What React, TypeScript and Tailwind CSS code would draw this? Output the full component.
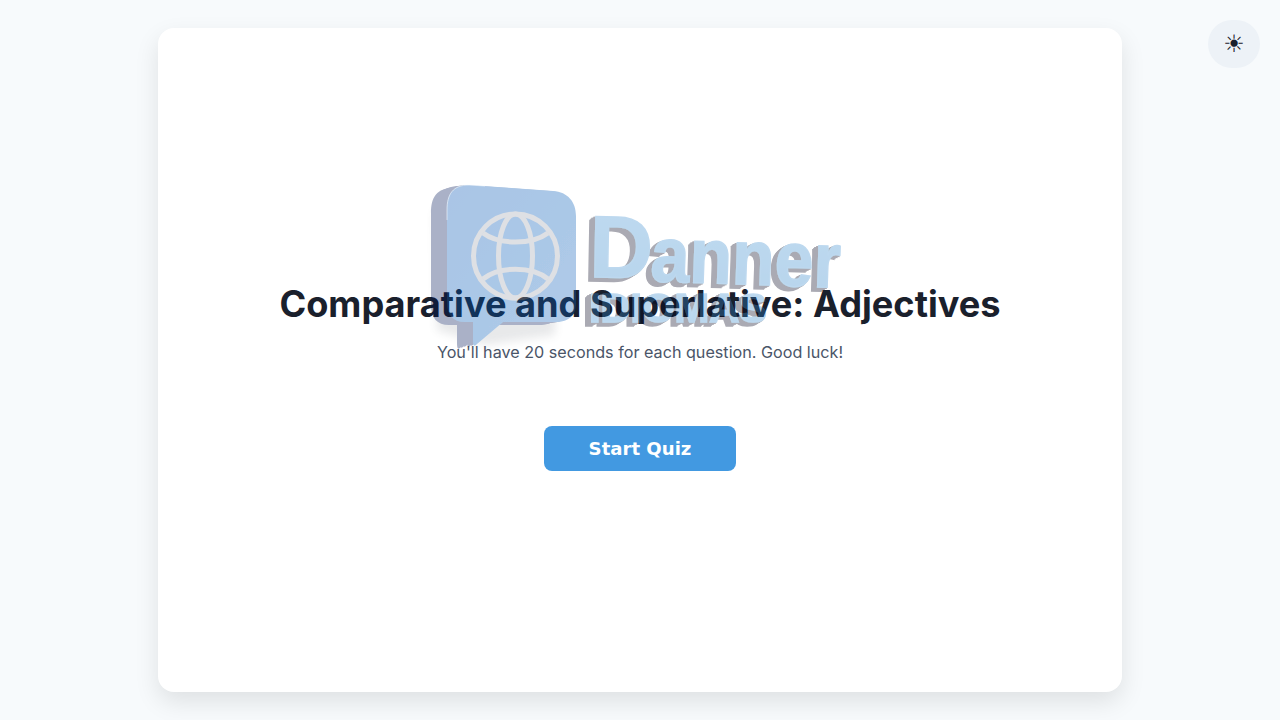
function Logo() {
  return (
    <svg
      width="450"
      height="180"
      viewBox="0 0 450 180"
      className="pointer-events-none absolute left-[267px] top-[152px] font-['Liberation_Sans',sans-serif] font-bold opacity-[0.33]"
    >
      <defs>
        <linearGradient id="bubble" x1="0" y1="0" x2="1" y2="1">
          <stop offset="0" stopColor="#0052b4" />
          <stop offset="1" stopColor="#0a62bc" />
        </linearGradient>
        <linearGradient id="word" x1="0" y1="0" x2="0" y2="1">
          <stop offset="0" stopColor="#3f90d2" />
          <stop offset="1" stopColor="#2880c8" />
        </linearGradient>
        <filter id="soft" x="-20%" y="-20%" width="140%" height="140%">
          <feGaussianBlur stdDeviation="5" />
        </filter>
        <filter id="extrudeBubble" x="-20%" y="-10%" width="130%" height="120%">
          <feOffset in="SourceAlpha" dx="-3" dy="0" result="a" />
          <feOffset in="SourceAlpha" dx="-6" dy="1" result="b" />
          <feOffset in="SourceAlpha" dx="-10" dy="1" result="c" />
          <feOffset in="SourceAlpha" dx="-13" dy="2" result="d" />
          <feOffset in="SourceAlpha" dx="-16" dy="3" result="e" />
          <feMerge result="side">
            <feMergeNode in="a" />
            <feMergeNode in="b" />
            <feMergeNode in="c" />
            <feMergeNode in="d" />
            <feMergeNode in="e" />
          </feMerge>
          <feFlood floodColor="#001858" />
          <feComposite in2="side" operator="in" result="shade" />
          <feMerge>
            <feMergeNode in="shade" />
            <feMergeNode in="SourceGraphic" />
          </feMerge>
        </filter>
        <filter id="extrude" x="-10%" y="-10%" width="120%" height="130%">
          <feOffset in="SourceAlpha" dx="-1" dy="1" result="a" />
          <feOffset in="SourceAlpha" dx="-2" dy="1" result="b" />
          <feOffset in="SourceAlpha" dx="-3" dy="2" result="c" />
          <feOffset in="SourceAlpha" dx="-4" dy="2" result="d" />
          <feOffset in="SourceAlpha" dx="-5" dy="3" result="e" />
          <feOffset in="SourceAlpha" dx="-6" dy="4" result="f" />
          <feMerge result="side">
            <feMergeNode in="a" />
            <feMergeNode in="b" />
            <feMergeNode in="c" />
            <feMergeNode in="d" />
            <feMergeNode in="e" />
            <feMergeNode in="f" />
          </feMerge>
          <feFlood floodColor="#00001b" />
          <feComposite in2="side" operator="in" result="shade" />
          <feMerge>
            <feMergeNode in="shade" />
            <feMergeNode in="SourceGraphic" />
          </feMerge>
        </filter>
      </defs>
      <path d="M12 150 L10 30 L130 30 L130 155 L60 165 Z" fill="#38404c" filter="url(#soft)" opacity="0.35" />
      <path
        d="M44 5 L128 11 C143 12 151 22 151 36 L151 122 C151 135 145 142 130 142 L78 142 L52 164 C49 167 48 166 48 160 L48 142 L40 142 C28 142 22 135 22 122 L22 30 C22 14 28 5 44 5 Z"
        fill="url(#bubble)"
        filter="url(#extrudeBubble)"
      />
      <path d="M22 40 L22 30 C22 14 28 5 44 5 L60 6" fill="none" stroke="#dfeefc" strokeWidth="1" opacity="0.6" />
      <g fill="none" stroke="#9da3af" strokeWidth="5">
        <circle cx="90.5" cy="76" r="42" />
        <ellipse cx="90.5" cy="76" rx="17" ry="42" />
        <path d="M58 53 C74 65 107 65 123 53" />
        <path d="M58 99 C74 86 107 86 123 99" />
      </g>
      <g filter="url(#extrude)" stroke="#3a8ccf" strokeWidth="1.5">
        <text x="164" y="97" fontSize="88" fill="url(#word)" transform="rotate(1 164 97)">D</text>
        <text x="225" y="101" fontSize="78" fill="url(#word)" textLength="190" lengthAdjust="spacingAndGlyphs" transform="rotate(2 225 101)">anner</text>
        <text x="164" y="142" fontSize="40" fill="#3388ce" textLength="178" lengthAdjust="spacingAndGlyphs">IDIOMAS</text>
      </g>
    </svg>
  );
}

export default function App() {
  return (
    <div className="relative flex h-screen items-center justify-center bg-[#f7fafc] font-['Inter',sans-serif]">
      <button className="absolute right-5 top-5 flex h-12 w-[52px] items-center justify-center rounded-full bg-[#edf2f7] pb-px font-['DejaVu_Sans',sans-serif] text-2xl text-[#1a202c]">
        ☀
      </button>
      <main className="relative flex h-[664px] w-[964px] flex-col items-center justify-center rounded-2xl bg-white pt-[30px] shadow-[0_10px_25px_rgba(0,0,0,0.1)]">
        <h1 className="mb-3.5 mt-0.5 text-center text-[36.2px] leading-[44px] font-bold text-[#1a202c]">
          Comparative and Superlative: Adjectives
        </h1>
        <p className="mb-[62px] text-[16.16px] leading-6 text-[#4a5568]">
          You'll have 20 seconds for each question. Good luck!
        </p>
        <button className="h-[45px] w-48 rounded-lg bg-[#4299e1] pt-px font-['DejaVu_Sans',sans-serif] text-[18.1px] font-bold text-white">
          Start Quiz
        </button>
        <Logo />
      </main>
    </div>
  );
}
